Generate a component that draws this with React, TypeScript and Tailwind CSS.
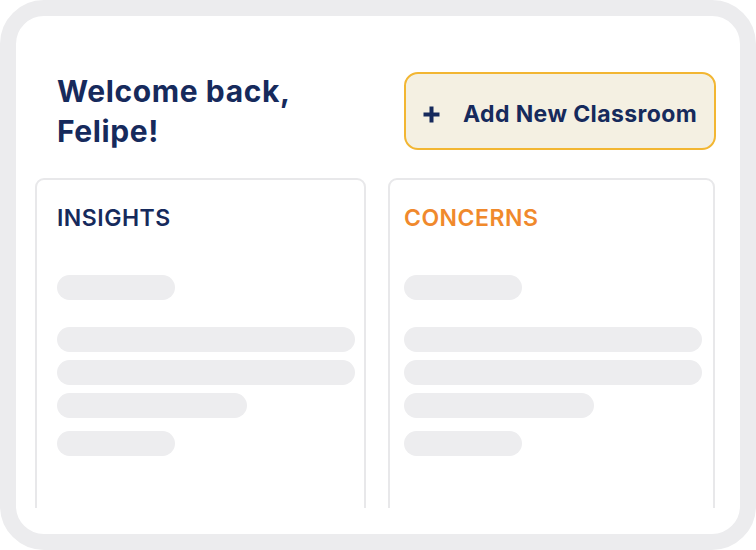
import React from 'react';

const navy = 'text-[#162a5c]';

function Bar({ w, className = '' }: { w: string; className?: string }) {
  return <div className={`h-[25px] rounded-full bg-[#ededef] ${w} ${className}`} />;
}

function Card({ title, color, pad, width }: { title: string; color: string; pad: string; width: string }) {
  return (
    <div className={`${width} h-[360px] shrink-0 rounded-[9px] border-2 border-[#e8e8ea] bg-white pt-[24px] ${pad}`}>
      <h2 className={`text-[23px] leading-[28px] font-semibold tracking-[0.5px] ${color}`}>{title}</h2>
      <Bar w="w-[118px]" className="mt-[43px]" />
      <Bar w="w-[298px]" className="mt-[27px]" />
      <Bar w="w-[298px]" className="mt-[8px]" />
      <Bar w="w-[190px]" className="mt-[8px]" />
      <Bar w="w-[118px]" className="mt-[13px]" />
    </div>
  );
}

export default function App() {
  return (
    <div className="w-[756px] h-[550px] bg-white">
      <div className="w-[756px] h-[550px] rounded-[44px] border-[16px] border-[#ececee] bg-white overflow-hidden font-['Inter',sans-serif]">
        <div className="flex items-start justify-between pt-[55px] pl-[41px] pr-[24px]">
          <h1 className={`text-[30px] leading-[40px] font-bold tracking-[0.6px] ${navy}`}>
            Welcome back,
            <br />
            Felipe!
          </h1>
          <button className="mt-px flex h-[78px] w-[312px] items-center rounded-[14px] border-2 border-[#f2b632] bg-[#f4f0e2] pl-[16px] pt-[6px]">
            <svg width="19" height="19" viewBox="0 0 19 19" className="shrink-0">
              <path d="M9.5 1.5v16M1.5 9.5h16" stroke="#162a5c" strokeWidth="4" />
            </svg>
            <span className={`ml-[22px] text-[23px] font-bold tracking-[0.4px] ${navy}`}>Add New Classroom</span>
          </button>
        </div>

        <div className="mt-[27px] flex h-[330px] gap-[22px] overflow-hidden pl-[19px]">
          <Card title="INSIGHTS" color={navy} pad="pl-[20px]" width="w-[331px]" />
          <Card title="CONCERNS" color="text-[#f0892c]" pad="pl-[14px]" width="w-[327px]" />
        </div>
      </div>
    </div>
  );
}
